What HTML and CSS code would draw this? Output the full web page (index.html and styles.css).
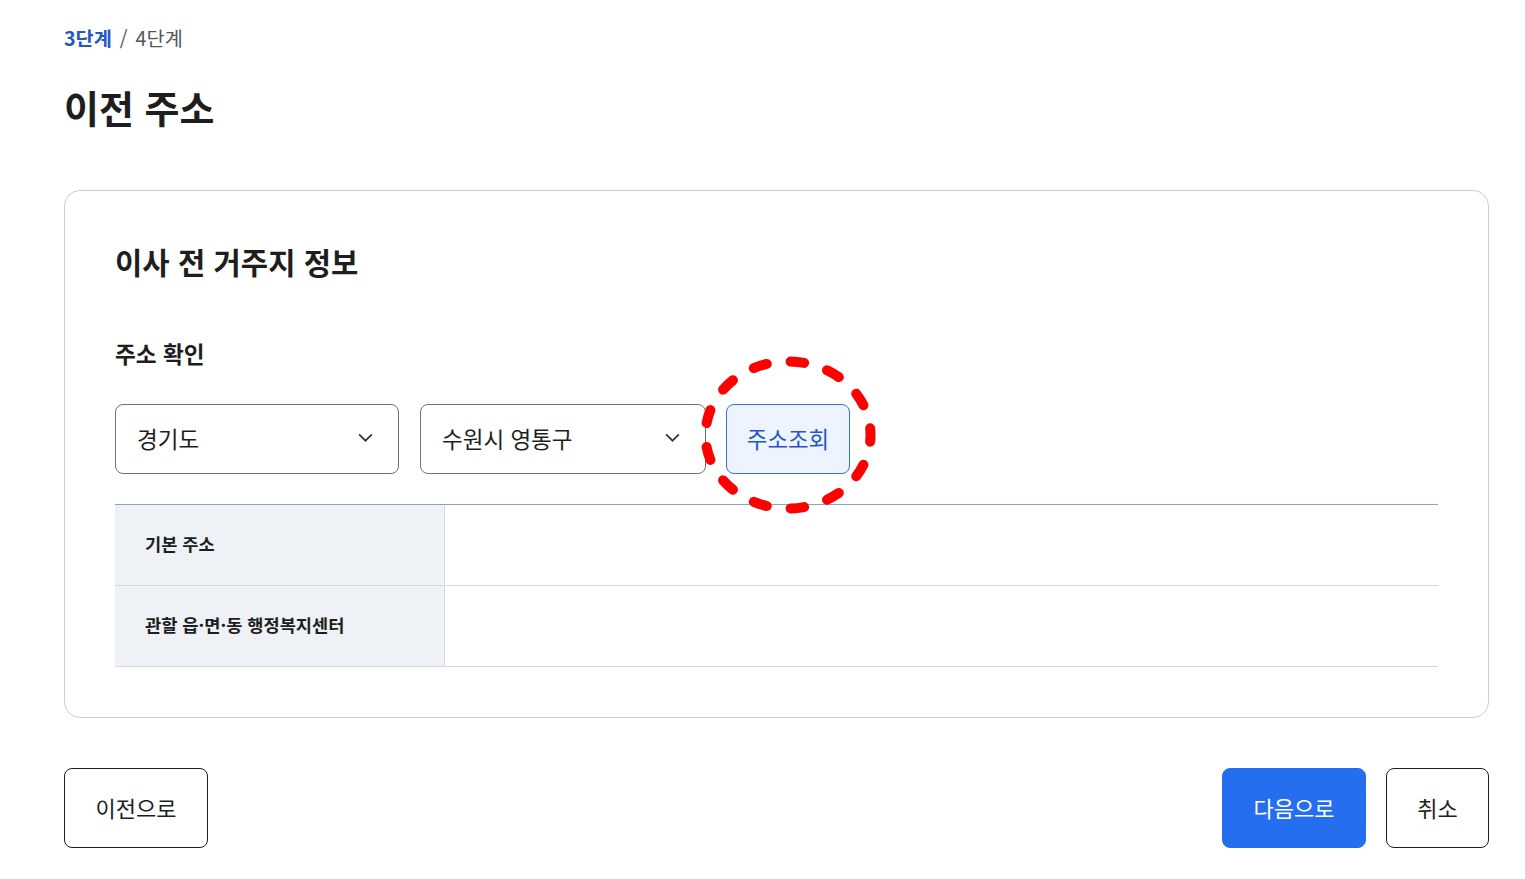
FILE: index.html
```html
<!DOCTYPE html>
<html lang="ko">
<head>
<meta charset="utf-8">
<link rel="stylesheet" href="styles.css">
</head>
<body>
<div class="page">
  <div class="crumb"><span class="cur">3단계</span><span class="sep">/</span><span class="next">4단계</span></div>
  <h1 class="title">이전 주소</h1>
  <section class="card">
    <h2 class="card-title">이사 전 거주지 정보</h2>
    <div class="label">주소 확인</div>
    <div class="row">
      <div class="select"><span>경기도</span><svg class="chev" viewBox="0 0 16 16" width="17" height="17"><path d="M2 5l6 6 6-6" fill="none" stroke="#333" stroke-width="1.6"/></svg></div>
      <div class="select"><span>수원시 영통구</span><svg class="chev" viewBox="0 0 16 16" width="17" height="17"><path d="M2 5l6 6 6-6" fill="none" stroke="#333" stroke-width="1.6"/></svg></div>
      <div class="search-wrap">
        <button class="search">주소조회</button>
        <svg class="circle" viewBox="0 0 190 170" width="190" height="170"><ellipse cx="95" cy="85" rx="82.5" ry="73.5" fill="none" stroke="#ff0000" stroke-width="10" stroke-linecap="round" pathLength="130" stroke-dasharray="3.6 6.4" stroke-dashoffset="1.8"/></svg>
      </div>
    </div>
    <div class="table">
      <div class="th">기본 주소</div><div class="td"></div>
      <div class="th">관할 읍·면·동 행정복지센터</div><div class="td"></div>
    </div>
  </section>
  <div class="actions">
    <button class="btn">이전으로</button>
    <div class="right">
      <button class="btn primary">다음으로</button>
      <button class="btn small">취소</button>
    </div>
  </div>
</div>
</body>
</html>
```
FILE: styles.css
```css
* { box-sizing: border-box; }
body {
  margin: 0;
  background: #fff;
  font-family: "Noto Sans CJK KR", "Noto Sans", sans-serif;
  color: #1e1e1e;
}
.page { padding: 22px 36px 0 64px; }
.crumb { font-size: 19.7px; line-height: 32px; display: flex; gap: 8px; }
.crumb .cur { color: #2457c5; font-weight: 700; }
.crumb .sep { color: #555; }
.crumb .next { color: #555; }
.title { margin: 25px 0 0; font-size: 38px; line-height: 56px; font-weight: 700; color: #1e1e1e; }
.card {
  margin-top: 55px;
  border: 1px solid #cfcfcf;
  border-radius: 16px;
  padding: 45px 50px 50px 50px;
}
.card-title { margin: 0; font-size: 29.7px; line-height: 52px; font-weight: 700; }
.label { margin-top: 50px; font-size: 22.6px; line-height: 32px; font-weight: 700; }
.row { display: flex; gap: 20px; margin-top: 34px; align-items: center; }
.select {
  width: 284px; height: 70px;
  border: 1px solid #707070; border-radius: 8px;
  display: flex; align-items: center; justify-content: space-between;
  padding: 0 24px 3px 21px;
  font-size: 22.5px; color: #1e1e1e;
}
.select + .select { width: 286px; margin-left: 1px; }
.search-wrap { position: relative; }
.search {
  width: 124px; height: 70px;
  border: 1px solid #2f72d8; border-radius: 8px;
  background: #eef4ff; color: #2457c5;
  font-family: inherit; font-size: 22.4px;
  padding: 0 0 3px;
  display: block;
}
.circle { position: absolute; left: -33.5px; top: -54.5px; pointer-events: none; }
.table {
  margin-top: 30px;
  display: grid; grid-template-columns: 330px 1fr;
  border-top: 1px solid #8ea3bd;
}
.th, .td { height: 81px; border-bottom: 1px solid #d8d8d8; }
.th {
  background: #eef1f6; border-right: 1px solid #d8d8d8;
  display: flex; align-items: center; padding: 0 0 3px 30px;
  font-size: 17.6px; font-weight: 700; color: #1e1e1e;
}
.actions { margin-top: 50px; display: flex; justify-content: space-between; }
.right { display: flex; gap: 20px; }
.btn {
  width: 144px; height: 80px;
  border: 1px solid #1e1e1e; border-radius: 8px;
  background: #fff; color: #1e1e1e;
  font-family: inherit; font-size: 22px;
  padding: 0 0 3px;
}
.btn.primary { background: #256ef0; border-color: #256ef0; color: #fff; }
.btn.small { width: 103px; }
```
